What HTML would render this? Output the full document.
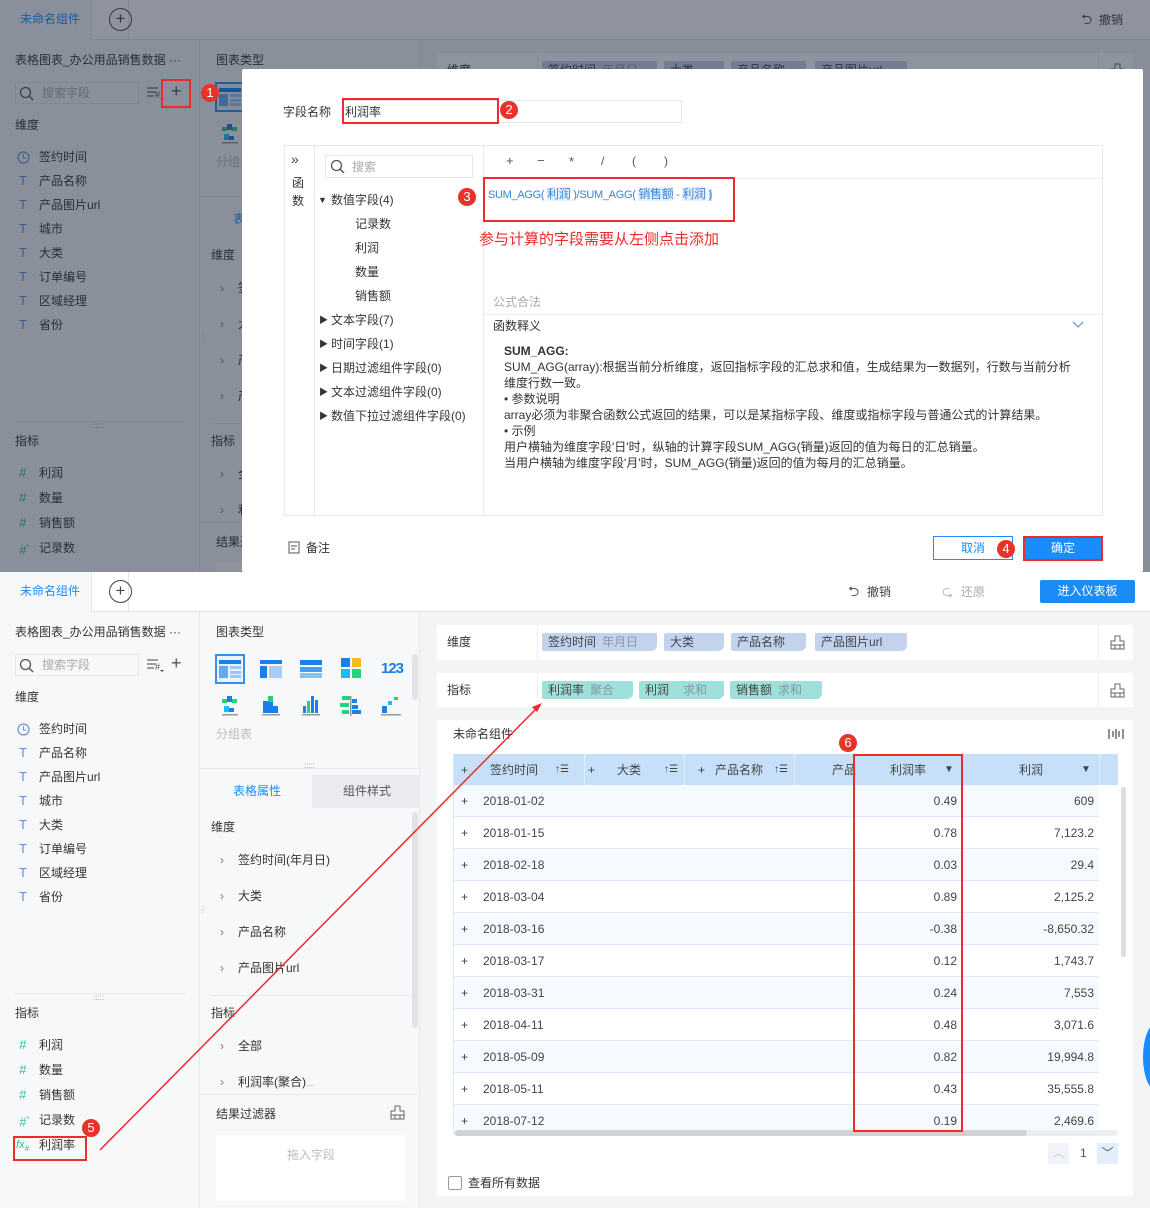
<!DOCTYPE html>
<html><head><meta charset="utf-8"><style>
*{box-sizing:border-box;margin:0;padding:0}
body{width:1150px;height:1208px;position:relative;overflow:hidden;font-family:"Liberation Sans","Noto Sans CJK SC",sans-serif;font-size:12px;color:#333;background:#fff}
.app{position:absolute;left:0;width:1150px;height:636px;overflow:hidden;background:#f3f4f6}
.a{position:absolute}
.t{position:absolute;white-space:nowrap;font-size:12px;line-height:16px}
.c{position:absolute;width:18px;height:18px;border-radius:50%;background:#e8332a;color:#fff;font-size:13px;line-height:18px;text-align:center}
.rb{position:absolute;border:2px solid #ee2a2a}
.chip{position:absolute;height:18px;line-height:18px;font-size:12px;padding-left:6px;border-radius:2px 2px 6px 2px;color:#444;white-space:nowrap}
.dim{background:#c3d3ee}.met{background:#9ee1da}
.chip i{font-style:normal;color:#8a96a8;margin-left:6px}
.ic{color:#5f8fd9;font-size:13px}
.ig{color:#2dbf9e;font-size:13px;font-style:italic}
.row{position:absolute;left:453px;width:645px;height:32px;border-bottom:1px solid #d9e8fa}
.row span{position:absolute;top:8px;line-height:16px;font-size:12px;color:#444}
.hd{position:absolute;top:8px;line-height:16px;font-size:12px;color:#444;white-space:nowrap}
</style></head><body>

<div class="app" id="appb" style="top:572px">
 <div class="a" style="left:0;top:0;width:1150px;height:40px;background:#fff;border-bottom:1px solid #e3e5e9"></div>
 <div class="a" style="left:0;top:0;width:92px;height:40px;background:#f7f8fa;border-right:1px solid #e3e5e9"></div>
 <div class="a" style="left:92px;top:0;width:37px;height:40px;border-right:1px solid #e3e5e9"></div>
 <div class="t" style="left:20px;top:11px;color:#1a8cff">未命名组件</div>
 <div class="a" style="left:109px;top:8px;width:23px;height:23px;border:1px solid #444;border-radius:50%;text-align:center;line-height:20px;font-size:17px;color:#444">+</div>
 <div class="tb-right onlyb">
  <div class="t" style="left:848px;top:11px;color:#555;font-size:14px">⮌</div>
  <div class="t" style="left:867px;top:12px;color:#444">撤销</div>
  <div class="t" style="left:942px;top:11px;color:#bbb;font-size:14px">⮎</div>
  <div class="t" style="left:961px;top:12px;color:#aaa">还原</div>
  <div class="a" style="left:1040px;top:8px;width:95px;height:23px;background:#1b8bf5;border-radius:2px;color:#fff;text-align:center;line-height:23px">进入仪表板</div>
 </div>
 <div class="a" style="left:0;top:41px;width:200px;height:600px;background:#f7f8fa;border-right:1px solid #e6e8eb"></div>
 <div class="t" style="left:15px;top:52px">表格图表_办公用品销售数据 ···</div>
 <div class="a" style="left:15px;top:82px;width:124px;height:22px;border:1px solid #e3e5e8;background:#f7f8fa"></div>
 <svg class="a" style="left:19px;top:86px" width="15" height="15"><circle cx="6.5" cy="6.5" r="5" fill="none" stroke="#555" stroke-width="1.3"/><line x1="10" y1="10" x2="14" y2="14" stroke="#555" stroke-width="1.4"/></svg>
 <div class="t" style="left:42px;top:85px;color:#aaa">搜索字段</div>
 <svg class="a" style="left:146px;top:85px" width="20" height="16"><path d="M1 3h11M1 7h9M1 11h7" stroke="#666" stroke-width="1.3"/><text x="9" y="13" font-size="9" fill="#555" font-family="Liberation Sans">#</text><path d="M14 13l2 2 2-2z" fill="#444"/></svg>
 <div class="t" style="left:171px;top:83px;font-size:18px;color:#555">+</div>
 <div class="t" style="left:15px;top:117px">维度</div>
 <svg class="a" style="left:17px;top:151px" width="13" height="13"><circle cx="6.5" cy="6.5" r="5.5" fill="none" stroke="#6d93d6" stroke-width="1.2"/><path d="M6.5 3v4h3" stroke="#6d93d6" fill="none"/></svg>
 <div class="t" style="left:39px;top:149px">签约时间</div>
 <div class="t ic" style="left:19px;top:173px">T</div><div class="t" style="left:39px;top:173px">产品名称</div>
 <div class="t ic" style="left:19px;top:197px">T</div><div class="t" style="left:39px;top:197px">产品图片url</div>
 <div class="t ic" style="left:19px;top:221px">T</div><div class="t" style="left:39px;top:221px">城市</div>
 <div class="t ic" style="left:19px;top:245px">T</div><div class="t" style="left:39px;top:245px">大类</div>
 <div class="t ic" style="left:19px;top:269px">T</div><div class="t" style="left:39px;top:269px">订单编号</div>
 <div class="t ic" style="left:19px;top:293px">T</div><div class="t" style="left:39px;top:293px">区域经理</div>
 <div class="t ic" style="left:19px;top:317px">T</div><div class="t" style="left:39px;top:317px">省份</div>
 <div class="a" style="left:15px;top:421px;width:170px;height:1px;background:#e5e7ea"></div>
 <div class="t" style="left:93px;top:418px;font-size:8px;color:#999">:::::</div>
 <div class="t" style="left:15px;top:433px">指标</div>
 <div class="t ig" style="left:19px;top:465px">#</div><div class="t" style="left:39px;top:465px">利润</div>
 <div class="t ig" style="left:19px;top:490px">#</div><div class="t" style="left:39px;top:490px">数量</div>
 <div class="t ig" style="left:19px;top:515px">#</div><div class="t" style="left:39px;top:515px">销售额</div>
 <div class="t ig" style="left:19px;top:540px">#<sup style="font-size:7px">*</sup></div><div class="t" style="left:39px;top:540px">记录数</div>
 <div class="onlyb">
  <div class="t ig" style="left:16px;top:565px;font-size:11px">fx<sub style="font-size:8px">#</sub></div><div class="t" style="left:39px;top:565px">利润率</div>
  <div class="rb" style="left:13px;top:564px;width:74px;height:25px"></div>
  <div class="c" style="left:82px;top:547px">5</div>
 </div>
 <div class="a" style="left:200px;top:41px;width:220px;height:600px;background:#f7f8fa;border-right:1px solid #e6e8eb"></div>
 <div class="t" style="left:216px;top:52px">图表类型</div>
 <div class="a" style="left:215px;top:82px;width:30px;height:30px;border:2px solid #3a8ee6;background:#eaf2fc"></div>
 <svg class="a" style="left:219px;top:88px" width="22" height="18"><rect x="0" y="0" width="22" height="4" fill="#1a7fe8"/><rect x="0" y="6" width="9" height="12" fill="#69a8f0"/><rect x="11" y="6" width="11" height="3" fill="#9cc6f5"/><rect x="11" y="11" width="11" height="3" fill="#9cc6f5"/><rect x="11" y="15" width="11" height="3" fill="#9cc6f5"/></svg>
 <svg class="a" style="left:260px;top:88px" width="22" height="18"><rect x="0" y="0" width="22" height="4" fill="#1a7fe8"/><rect x="0" y="6" width="7" height="12" fill="#1a7fe8"/><rect x="9" y="6" width="13" height="12" fill="#a9cdf5"/></svg>
 <svg class="a" style="left:300px;top:88px" width="22" height="18"><rect x="0" y="0" width="22" height="5" fill="#1a7fe8"/><rect x="0" y="7" width="22" height="5" fill="#4b9bef"/><rect x="0" y="13" width="22" height="5" fill="#8dbff4"/></svg>
 <svg class="a" style="left:341px;top:86px" width="20" height="20"><rect x="0" y="0" width="9" height="9" fill="#1a7fe8"/><rect x="11" y="0" width="9" height="9" fill="#f5b922"/><rect x="0" y="11" width="9" height="9" fill="#14c0f0"/><rect x="11" y="11" width="9" height="9" fill="#23d27a"/></svg>
 <div class="t" style="left:381px;top:89px;font-size:15px;font-weight:bold;color:#1a7fe8;letter-spacing:-1px">123</div>
 <svg class="a" style="left:220px;top:124px" width="20" height="20"><rect x="7" y="0" width="5" height="6" fill="#1a7fe8"/><rect x="2" y="3" width="5" height="4" fill="#23d27a"/><rect x="12" y="3" width="5" height="4" fill="#23d27a"/><rect x="4" y="10" width="5" height="6" fill="#14c0f0"/><rect x="9" y="12" width="5" height="4" fill="#1a7fe8"/><rect x="2" y="18" width="16" height="1.5" fill="#999"/></svg>
 <svg class="a" style="left:261px;top:124px" width="20" height="20"><rect x="2" y="5" width="5" height="12" fill="#1a7fe8"/><rect x="7" y="0" width="5" height="6" fill="#23d27a"/><rect x="7" y="6" width="5" height="11" fill="#1a7fe8"/><rect x="12" y="10" width="5" height="7" fill="#1a7fe8"/><rect x="1" y="18" width="18" height="1.5" fill="#999"/></svg>
 <svg class="a" style="left:301px;top:124px" width="20" height="20"><rect x="2" y="10" width="3" height="7" fill="#1a7fe8"/><rect x="6" y="5" width="3" height="12" fill="#23d27a"/><rect x="10" y="0" width="3" height="17" fill="#1a7fe8"/><rect x="14" y="4" width="3" height="13" fill="#1a7fe8"/><rect x="1" y="18" width="18" height="1.5" fill="#999"/></svg>
 <svg class="a" style="left:340px;top:124px" width="22" height="20"><rect x="2" y="0" width="8" height="4" fill="#23d27a"/><rect x="0" y="7" width="9" height="4" fill="#23d27a"/><rect x="2" y="14" width="7" height="4" fill="#23d27a"/><rect x="10" y="0" width="1.5" height="20" fill="#999"/><rect x="12" y="3" width="5" height="4" fill="#1a7fe8"/><rect x="12" y="9" width="6" height="4" fill="#1a7fe8"/><rect x="12" y="14" width="9" height="4" fill="#1a7fe8"/></svg>
 <svg class="a" style="left:381px;top:124px" width="20" height="20"><rect x="1" y="10" width="5" height="7" fill="#1a7fe8"/><rect x="7" y="5" width="4" height="4" fill="#14c0f0"/><rect x="13" y="1" width="4" height="3" fill="#23d27a"/><rect x="0" y="18" width="20" height="1.5" fill="#999"/></svg>
 <div class="t" style="left:216px;top:154px;color:#bbb">分组表</div>
 <div class="a" style="left:412px;top:82px;width:6px;height:46px;background:#e0e2e5;border-radius:3px"></div>
 <div class="t" style="left:304px;top:186px;font-size:8px;color:#999">:::::</div>
 <div class="a" style="left:200px;top:196px;width:220px;height:1px;background:#e5e7ea"></div>
 <div class="a" style="left:312px;top:203px;width:108px;height:33px;background:#e9ebef"></div>
 <div class="t" style="left:233px;top:211px;color:#1a8cff">表格属性</div>
 <div class="t" style="left:343px;top:211px;color:#555">组件样式</div>
 <div class="t" style="left:211px;top:247px">维度</div>
 <div class="t" style="left:220px;top:280px;color:#777">›</div><div class="t" style="left:238px;top:280px">签约时间(年月日)</div>
 <div class="t" style="left:220px;top:316px;color:#777">›</div><div class="t" style="left:238px;top:316px">大类</div>
 <div class="t" style="left:220px;top:352px;color:#777">›</div><div class="t" style="left:238px;top:352px">产品名称</div>
 <div class="t" style="left:220px;top:388px;color:#777">›</div><div class="t" style="left:238px;top:388px">产品图片url</div>
 <div class="a" style="left:211px;top:423px;width:199px;height:1px;background:#e5e7ea"></div>
 <div class="t" style="left:211px;top:433px">指标</div>
 <div class="t" style="left:220px;top:466px;color:#777">›</div><div class="t" style="left:238px;top:466px">全部</div>
 <div class="t" style="left:220px;top:502px;color:#777">›</div><div class="t" style="left:238px;top:502px">利润率(聚合)<span style="font-size:8px;color:#999">....</span></div>
 <div class="a" style="left:412px;top:240px;width:6px;height:216px;background:#e0e2e5;border-radius:3px"></div>
 <div class="a" style="left:200px;top:522px;width:220px;height:1px;background:#e5e7ea"></div>
 <div class="t" style="left:216px;top:534px">结果过滤器</div>
 <svg class="a" style="left:390px;top:533px" width="15" height="15"><path d="M5 1h5v5h4v8H1V6h4z" fill="none" stroke="#666"/><path d="M1 10h13M5 10v4M10 10v4" stroke="#666"/></svg>
 <div class="a" style="left:216px;top:563px;width:190px;height:66px;background:#fff"></div>
 <div class="t" style="left:287px;top:575px;color:#bbb">拖入字段</div>
 <div class="t" style="left:199px;top:330px;font-size:8px;color:#aaa">⋮</div>
 <div class="a" style="left:437px;top:53px;width:696px;height:35px;background:#fff"></div>
 <div class="a" style="left:537px;top:53px;width:1px;height:35px;background:#eceef1"></div>
 <div class="a" style="left:1098px;top:53px;width:1px;height:35px;background:#eceef1"></div>
 <div class="t" style="left:447px;top:62px">维度</div>
 <div class="chip dim" style="left:542px;top:61px;width:115px">签约时间<i>年月日</i></div>
 <div class="chip dim" style="left:664px;top:61px;width:60px">大类</div>
 <div class="chip dim" style="left:731px;top:61px;width:75px">产品名称</div>
 <div class="chip dim" style="left:815px;top:61px;width:92px">产品图片url</div>
 <svg class="a" style="left:1110px;top:63px" width="15" height="15"><path d="M5 1h5v5h4v8H1V6h4z" fill="none" stroke="#666"/><path d="M1 10h13M5 10v4M10 10v4" stroke="#666"/></svg>
 <div class="a" style="left:437px;top:101px;width:696px;height:34px;background:#fff"></div>
 <div class="a" style="left:537px;top:101px;width:1px;height:34px;background:#eceef1"></div>
 <div class="a" style="left:1098px;top:101px;width:1px;height:34px;background:#eceef1"></div>
 <div class="t" style="left:447px;top:110px">指标</div>
 <div class="chip met" style="left:542px;top:109px;width:91px">利润率<i>聚合</i></div>
 <div class="chip met" style="left:639px;top:109px;width:85px">利润<i style="margin-left:14px">求和</i></div>
 <div class="chip met" style="left:730px;top:109px;width:92px">销售额<i>求和</i></div>
 <svg class="a" style="left:1110px;top:111px" width="15" height="15"><path d="M5 1h5v5h4v8H1V6h4z" fill="none" stroke="#666"/><path d="M1 10h13M5 10v4M10 10v4" stroke="#666"/></svg>
 <div class="a" style="left:437px;top:148px;width:696px;height:476px;background:#fff"></div>
 <div class="t" style="left:453px;top:154px">未命名组件</div>
 <svg class="a" style="left:1108px;top:156px" width="16" height="12"><path d="M1 1v10M5 3v6M8 1v10M11 3v6M15 1v10" stroke="#555" stroke-width="1.3"/></svg>
 <div class="a" style="left:453px;top:182px;width:665px;height:377px;overflow:hidden;border-left:1px solid #d9e8fa">
  <div class="a" style="left:0;top:0;width:665px;height:31px;background:#c6e0fa"></div>
  <div class="a" style="left:130px;top:0;width:1px;height:31px;background:#e4f0fd"></div>
  <div class="a" style="left:230px;top:0;width:1px;height:31px;background:#e4f0fd"></div>
  <div class="a" style="left:340px;top:0;width:1px;height:31px;background:#e4f0fd"></div>
  <div class="a" style="left:645px;top:0;width:1px;height:31px;background:#e4f0fd"></div>
  <div class="hd" style="left:7px">+</div><div class="hd" style="left:36px">签约时间</div><div class="hd" style="left:101px;font-size:10px">↑☰</div>
  <div class="hd" style="left:134px">+</div><div class="hd" style="left:163px">大类</div><div class="hd" style="left:210px;font-size:10px">↑☰</div>
  <div class="hd" style="left:244px">+</div><div class="hd" style="left:261px">产品名称</div><div class="hd" style="left:320px;font-size:10px">↑☰</div>
  <div class="hd" style="left:378px">产品</div>
  <div class="hd" style="left:436px">利润率</div><div class="hd" style="left:490px;font-size:10px">▼</div>
  <div class="hd" style="left:565px">利润</div><div class="hd" style="left:627px;font-size:10px">▼</div>
  <div id="rows"></div>
 </div>
 <div class="a" style="left:453px;top:558px;width:665px;height:6px;background:#eee;border-radius:3px"></div>
 <div class="a" style="left:455px;top:558px;width:572px;height:6px;background:#d2d2d2;border-radius:3px"></div>
 <div class="a" style="left:1121px;top:215px;width:5px;height:170px;background:#ddd;border-radius:3px"></div>
 <div class="a" style="left:1048px;top:571px;width:21px;height:21px;background:#f0f3f7;color:#ccc;text-align:center;line-height:21px">︿</div>
 <div class="t" style="left:1080px;top:573px;color:#555">1</div>
 <div class="a" style="left:1097px;top:571px;width:21px;height:21px;background:#e3eefb;color:#555;text-align:center;line-height:21px">﹀</div>
 <div class="a" style="left:448px;top:604px;width:14px;height:14px;border:1px solid #999;border-radius:2px;background:#fff"></div>
 <div class="t" style="left:468px;top:603px">查看所有数据</div>
 <div class="a onlyb" style="left:1143px;top:450px;width:30px;height:70px;border-radius:50%;background:#1a8cff"></div>
 <div class="onlyb">
  <div class="rb" style="left:853px;top:182px;width:110px;height:378px"></div>
  <div class="c" style="left:839px;top:162px">6</div>
 </div>
</div>

<div id="topwrap" class="a" style="left:0;top:0;width:1150px;height:572px;overflow:hidden"></div>

<div id="dlg" class="a" style="left:0;top:0;width:1150px;height:572px">
 <div class="rb" style="left:161px;top:79px;width:30px;height:29px"></div>
 <div class="c" style="left:201px;top:84px">1</div>
 <div class="a" style="left:242px;top:69px;width:901px;height:503px;background:#fff;border-radius:2px"></div>
 <div class="t" style="left:283px;top:104px">字段名称</div>
 <div class="a" style="left:342px;top:100px;width:340px;height:23px;border:1px solid #e2e4e8"></div>
 <div class="t" style="left:345px;top:104px">利润率</div>
 <div class="rb" style="left:342px;top:98px;width:157px;height:26px"></div>
 <div class="c" style="left:500px;top:101px">2</div>
 <div class="a" style="left:284px;top:145px;width:819px;height:371px;border:1px solid #e6e8eb"></div>
 <div class="a" style="left:314px;top:146px;width:1px;height:369px;background:#e6e8eb"></div>
 <div class="a" style="left:483px;top:146px;width:1px;height:369px;background:#e6e8eb"></div>
 <div class="t" style="left:291px;top:151px;font-size:14px;color:#444">»</div>
 <div class="t" style="left:292px;top:175px">函</div>
 <div class="t" style="left:292px;top:193px">数</div>
 <div class="a" style="left:325px;top:155px;width:148px;height:23px;border:1px solid #e6e8eb"></div>
 <svg class="a" style="left:330px;top:159px" width="15" height="15"><circle cx="6.5" cy="6.5" r="5" fill="none" stroke="#555" stroke-width="1.3"/><line x1="10" y1="10" x2="14" y2="14" stroke="#555" stroke-width="1.4"/></svg>
 <div class="t" style="left:352px;top:159px;color:#aaa">搜索</div>
 <div class="t" style="left:318px;top:192px;font-size:9px">▼</div><div class="t" style="left:331px;top:192px">数值字段(4)</div>
 <div class="t" style="left:355px;top:216px">记录数</div>
 <div class="t" style="left:355px;top:240px">利润</div>
 <div class="t" style="left:355px;top:264px">数量</div>
 <div class="t" style="left:355px;top:288px">销售额</div>
 <div class="t" style="left:319px;top:312px;font-size:9px">▶</div><div class="t" style="left:331px;top:312px">文本字段(7)</div>
 <div class="t" style="left:319px;top:336px;font-size:9px">▶</div><div class="t" style="left:331px;top:336px">时间字段(1)</div>
 <div class="t" style="left:319px;top:360px;font-size:9px">▶</div><div class="t" style="left:331px;top:360px">日期过滤组件字段(0)</div>
 <div class="t" style="left:319px;top:384px;font-size:9px">▶</div><div class="t" style="left:331px;top:384px">文本过滤组件字段(0)</div>
 <div class="t" style="left:319px;top:408px;font-size:9px">▶</div><div class="t" style="left:331px;top:408px">数值下拉过滤组件字段(0)</div>
 <div class="t" style="left:506px;top:153px;font-size:13px;color:#555">+</div>
 <div class="t" style="left:537px;top:153px;font-size:13px;color:#555">−</div>
 <div class="t" style="left:569px;top:154px;font-size:13px;color:#555">*</div>
 <div class="t" style="left:601px;top:153px;font-size:12px;color:#555">/</div>
 <div class="t" style="left:632px;top:153px;font-size:12px;color:#555">(</div>
 <div class="t" style="left:664px;top:153px;font-size:12px;color:#555">)</div>
 <div class="a" style="left:484px;top:178px;width:618px;height:1px;background:#eceef1"></div>
 <div class="t" style="left:488px;top:186px;font-size:11px;color:#3b82d6;letter-spacing:-0.3px">SUM_AGG( <span style="background:#e4f0fd;font-size:12px">利润</span> )/SUM_AGG( <span style="background:#e4f0fd;font-size:12px">销售额</span> - <span style="background:#e4f0fd;font-size:12px">利润</span> <span style="background:#c3dbf7">)</span></div>
 <div class="rb" style="left:483px;top:177px;width:252px;height:45px"></div>
 <div class="c" style="left:458px;top:188px">3</div>
 <div class="t" style="left:479px;top:231px;font-size:15px;line-height:18px;color:#ee2a2a">参与计算的字段需要从左侧点击添加</div>
 <div class="t" style="left:493px;top:294px;color:#aaa">公式合法</div>
 <div class="a" style="left:484px;top:314px;width:618px;height:1px;background:#eceef1"></div>
 <div class="t" style="left:493px;top:318px">函数释义</div>
 <svg class="a" style="left:1072px;top:321px" width="12" height="8"><path d="M1 1l5 5 5-5" fill="none" stroke="#6a9ee0" stroke-width="1.3"/></svg>
 <div class="a" style="left:504px;top:343px;line-height:16px;font-size:12px;color:#333;white-space:nowrap">
  <b>SUM_AGG:</b><br>SUM_AGG(array):根据当前分析维度，返回指标字段的汇总求和值，生成结果为一数据列，行数与当前分析<br>维度行数一致。<br>• 参数说明<br>array必须为非聚合函数公式返回的结果，可以是某指标字段、维度或指标字段与普通公式的计算结果。<br>• 示例<br>用户横轴为维度字段'日'时，纵轴的计算字段SUM_AGG(销量)返回的值为每日的汇总销量。<br>当用户横轴为维度字段'月'时，SUM_AGG(销量)返回的值为每月的汇总销量。
 </div>
 <svg class="a" style="left:288px;top:541px" width="12" height="14"><rect x="1" y="1" width="10" height="11" fill="none" stroke="#555"/><path d="M3 5h6M3 8h4" stroke="#555"/></svg>
 <div class="t" style="left:306px;top:540px">备注</div>
 <div class="a" style="left:933px;top:536px;width:80px;height:24px;border:1px solid #1a8cff;color:#1a8cff;text-align:center;line-height:22px">取消</div>
 <div class="c" style="left:997px;top:540px">4</div>
 <div class="a" style="left:1023px;top:536px;width:80px;height:25px;background:#1a8cff;border:2px solid #ee2a2a;color:#fff;text-align:center;line-height:21px">确定</div>
</div>

<svg class="a" style="left:0;top:0" width="1150" height="1208"><line x1="100" y1="1150" x2="538" y2="707" stroke="#ee2a2a" stroke-width="1.5"/><path d="M542 703l-10 4 5 5z" fill="#ee2a2a"/></svg>

<script>
(function(){
 var rows=[["2018-01-02","0.49","609"],["2018-01-15","0.78","7,123.2"],["2018-02-18","0.03","29.4"],["2018-03-04","0.89","2,125.2"],["2018-03-16","-0.38","-8,650.32"],["2018-03-17","0.12","1,743.7"],["2018-03-31","0.24","7,553"],["2018-04-11","0.48","3,071.6"],["2018-05-09","0.82","19,994.8"],["2018-05-11","0.43","35,555.8"],["2018-07-12","0.19","2,469.6"]];
 var h="";
 rows.forEach(function(r,i){
  h+='<div class="row" style="left:0;top:'+(31+i*32)+'px;width:645px;background:'+(i%2?'#fff':'#f6f9fd')+'"><span style="left:7px">+</span><span style="left:29px">'+r[0]+'</span><span style="right:142px">'+r[1]+'</span><span style="right:5px">'+r[2]+'</span></div>';
 });
 document.getElementById('rows').innerHTML=h;
 var b=document.getElementById('appb');
 var c=b.cloneNode(true);c.id='appt';c.style.top='0px';
 var o=c.querySelectorAll('.onlyb');for(var i=0;i<o.length;i++)o[i].parentNode.removeChild(o[i]);
 var e=document.createElement('div');e.innerHTML='<div class="t" style="left:1081px;top:11px;color:#555;font-size:14px">⮌</div><div class="t" style="left:1099px;top:12px;color:#444">撤销</div>';
 while(e.firstChild)c.appendChild(e.firstChild);
 var w=document.getElementById('topwrap');w.appendChild(c);
 var ov=document.createElement('div');ov.className='a';ov.style.cssText='left:0;top:0;width:1150px;height:572px;background:rgba(30,40,60,0.5)';w.appendChild(ov);
 var d=document.getElementById('dlg');if(d)w.appendChild(d);
})();
</script>
</body></html>
